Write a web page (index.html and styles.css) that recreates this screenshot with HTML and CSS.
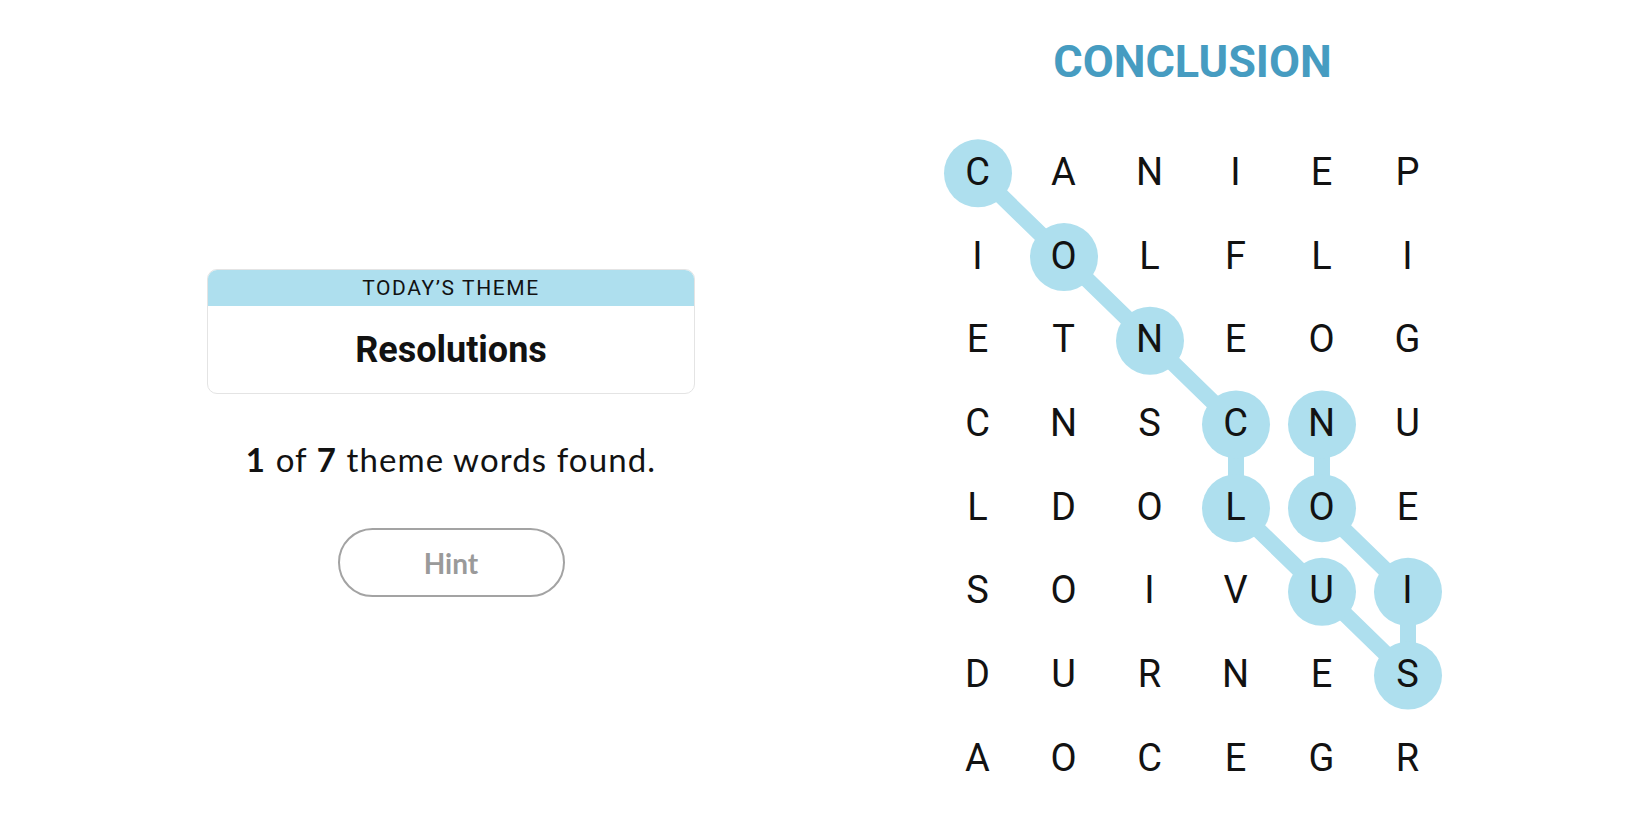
FILE: index.html
```html
<!DOCTYPE html>
<html lang="en">
<head>
<meta charset="utf-8">
<title>Strands</title>
<link rel="stylesheet" href="styles.css">
</head>
<body>
<main class="game">
  <section class="info">
    <div class="theme-card">
      <div class="theme-label">TODAY’S THEME</div>
      <div class="theme-name">Resolutions</div>
    </div>
    <p class="progress"><b>1</b> of <b>7</b> theme words found.</p>
    <button class="hint" type="button">Hint</button>
  </section>
  <section class="board">
    <h1 class="found-word">CONCLUSION</h1>
    <div class="grid">
      <svg class="paths" viewBox="0 0 516 669.6" width="516" height="669.6" aria-hidden="true">
        <polyline points="43,43.35 129,127.05 215,210.75 301,294.45 301,378.15 387,461.85 473,545.55 473,461.85 387,378.15 387,294.45" fill="none" stroke="#aedfee" stroke-width="16" stroke-linejoin="round" stroke-linecap="round"/>
        <g fill="#aedfee">
          <circle cx="43" cy="43.35" r="34"/>
          <circle cx="129" cy="127.05" r="34"/>
          <circle cx="215" cy="210.75" r="34"/>
          <circle cx="301" cy="294.45" r="34"/>
          <circle cx="301" cy="378.15" r="34"/>
          <circle cx="387" cy="461.85" r="34"/>
          <circle cx="473" cy="545.55" r="34"/>
          <circle cx="473" cy="461.85" r="34"/>
          <circle cx="387" cy="378.15" r="34"/>
          <circle cx="387" cy="294.45" r="34"/>
        </g>
      </svg>
      <span class="cell">C</span><span class="cell">A</span><span class="cell">N</span><span class="cell">I</span><span class="cell">E</span><span class="cell">P</span>
      <span class="cell">I</span><span class="cell">O</span><span class="cell">L</span><span class="cell">F</span><span class="cell">L</span><span class="cell">I</span>
      <span class="cell">E</span><span class="cell">T</span><span class="cell">N</span><span class="cell">E</span><span class="cell">O</span><span class="cell">G</span>
      <span class="cell">C</span><span class="cell">N</span><span class="cell">S</span><span class="cell">C</span><span class="cell">N</span><span class="cell">U</span>
      <span class="cell">L</span><span class="cell">D</span><span class="cell">O</span><span class="cell">L</span><span class="cell">O</span><span class="cell">E</span>
      <span class="cell">S</span><span class="cell">O</span><span class="cell">I</span><span class="cell">V</span><span class="cell">U</span><span class="cell">I</span>
      <span class="cell">D</span><span class="cell">U</span><span class="cell">R</span><span class="cell">N</span><span class="cell">E</span><span class="cell">S</span>
      <span class="cell">A</span><span class="cell">O</span><span class="cell">C</span><span class="cell">E</span><span class="cell">G</span><span class="cell">R</span>
    </div>
  </section>
</main>
</body>
</html>
```

FILE: styles.css
```css
* { box-sizing: border-box; }

html, body {
  margin: 0;
  padding: 0;
  background: #ffffff;
  color: #121212;
  font-family: "Roboto", "Liberation Sans", sans-serif;
}

body {
  width: 1650px;
  height: 825px;
  overflow: hidden;
}

.game {
  display: flex;
  align-items: flex-start;
}

.info {
  width: 902px;
  padding-top: 269px;
  display: flex;
  flex-direction: column;
  align-items: center;
}

.theme-card {
  width: 488px;
  border: 1px solid #e4e4e4;
  border-radius: 10px;
  overflow: hidden;
  background: #fff;
}

.theme-label {
  height: 36px;
  background: #aedfee;
  display: flex;
  align-items: center;
  justify-content: center;
  font-family: "Roboto", "Liberation Sans", sans-serif;
  font-size: 21px;
  letter-spacing: 1.6px;
  color: #121212;
}

.theme-name {
  height: 87px;
  display: flex;
  align-items: center;
  justify-content: center;
  font-family: "Roboto", "Liberation Sans", sans-serif;
  font-weight: 700;
  font-size: 36px;
  color: #121212;
}

.progress {
  margin: 46px 0 0;
  font-family: "Lato", "Liberation Sans", sans-serif;
  font-size: 33px;
  line-height: 38px;
  letter-spacing: 1.1px;
  color: #121212;
}

.progress b {
  font-weight: 700;
}

.hint {
  margin-top: 50px;
  width: 227px;
  height: 69px;
  border: 2px solid #a3a3a3;
  border-radius: 35px;
  background: #fff;
  font-family: "Lato", "Liberation Sans", sans-serif;
  font-weight: 700;
  font-size: 28px;
  color: #9a9a9a;
  padding: 0;
}

.board {
  margin-left: 32.5px;
  width: 516px;
  display: flex;
  flex-direction: column;
  align-items: center;
}

.found-word {
  margin: 39px 0 0;
  font-family: "Roboto", "Liberation Sans", sans-serif;
  font-weight: 700;
  font-size: 45px;
  line-height: 45px;
  color: #469cc1;
}

.grid {
  position: relative;
  margin-top: 46px;
  display: grid;
  grid-template-columns: repeat(6, 86px);
  grid-template-rows: repeat(8, 83.7px);
}

.paths {
  position: absolute;
  left: 0;
  top: 0;
  z-index: 0;
}

.cell {
  position: relative;
  z-index: 1;
  display: flex;
  align-items: center;
  justify-content: center;
  font-family: "Roboto", "Liberation Sans", sans-serif;
  font-size: 38px;
  font-weight: 400;
  color: #121212;
}
```
